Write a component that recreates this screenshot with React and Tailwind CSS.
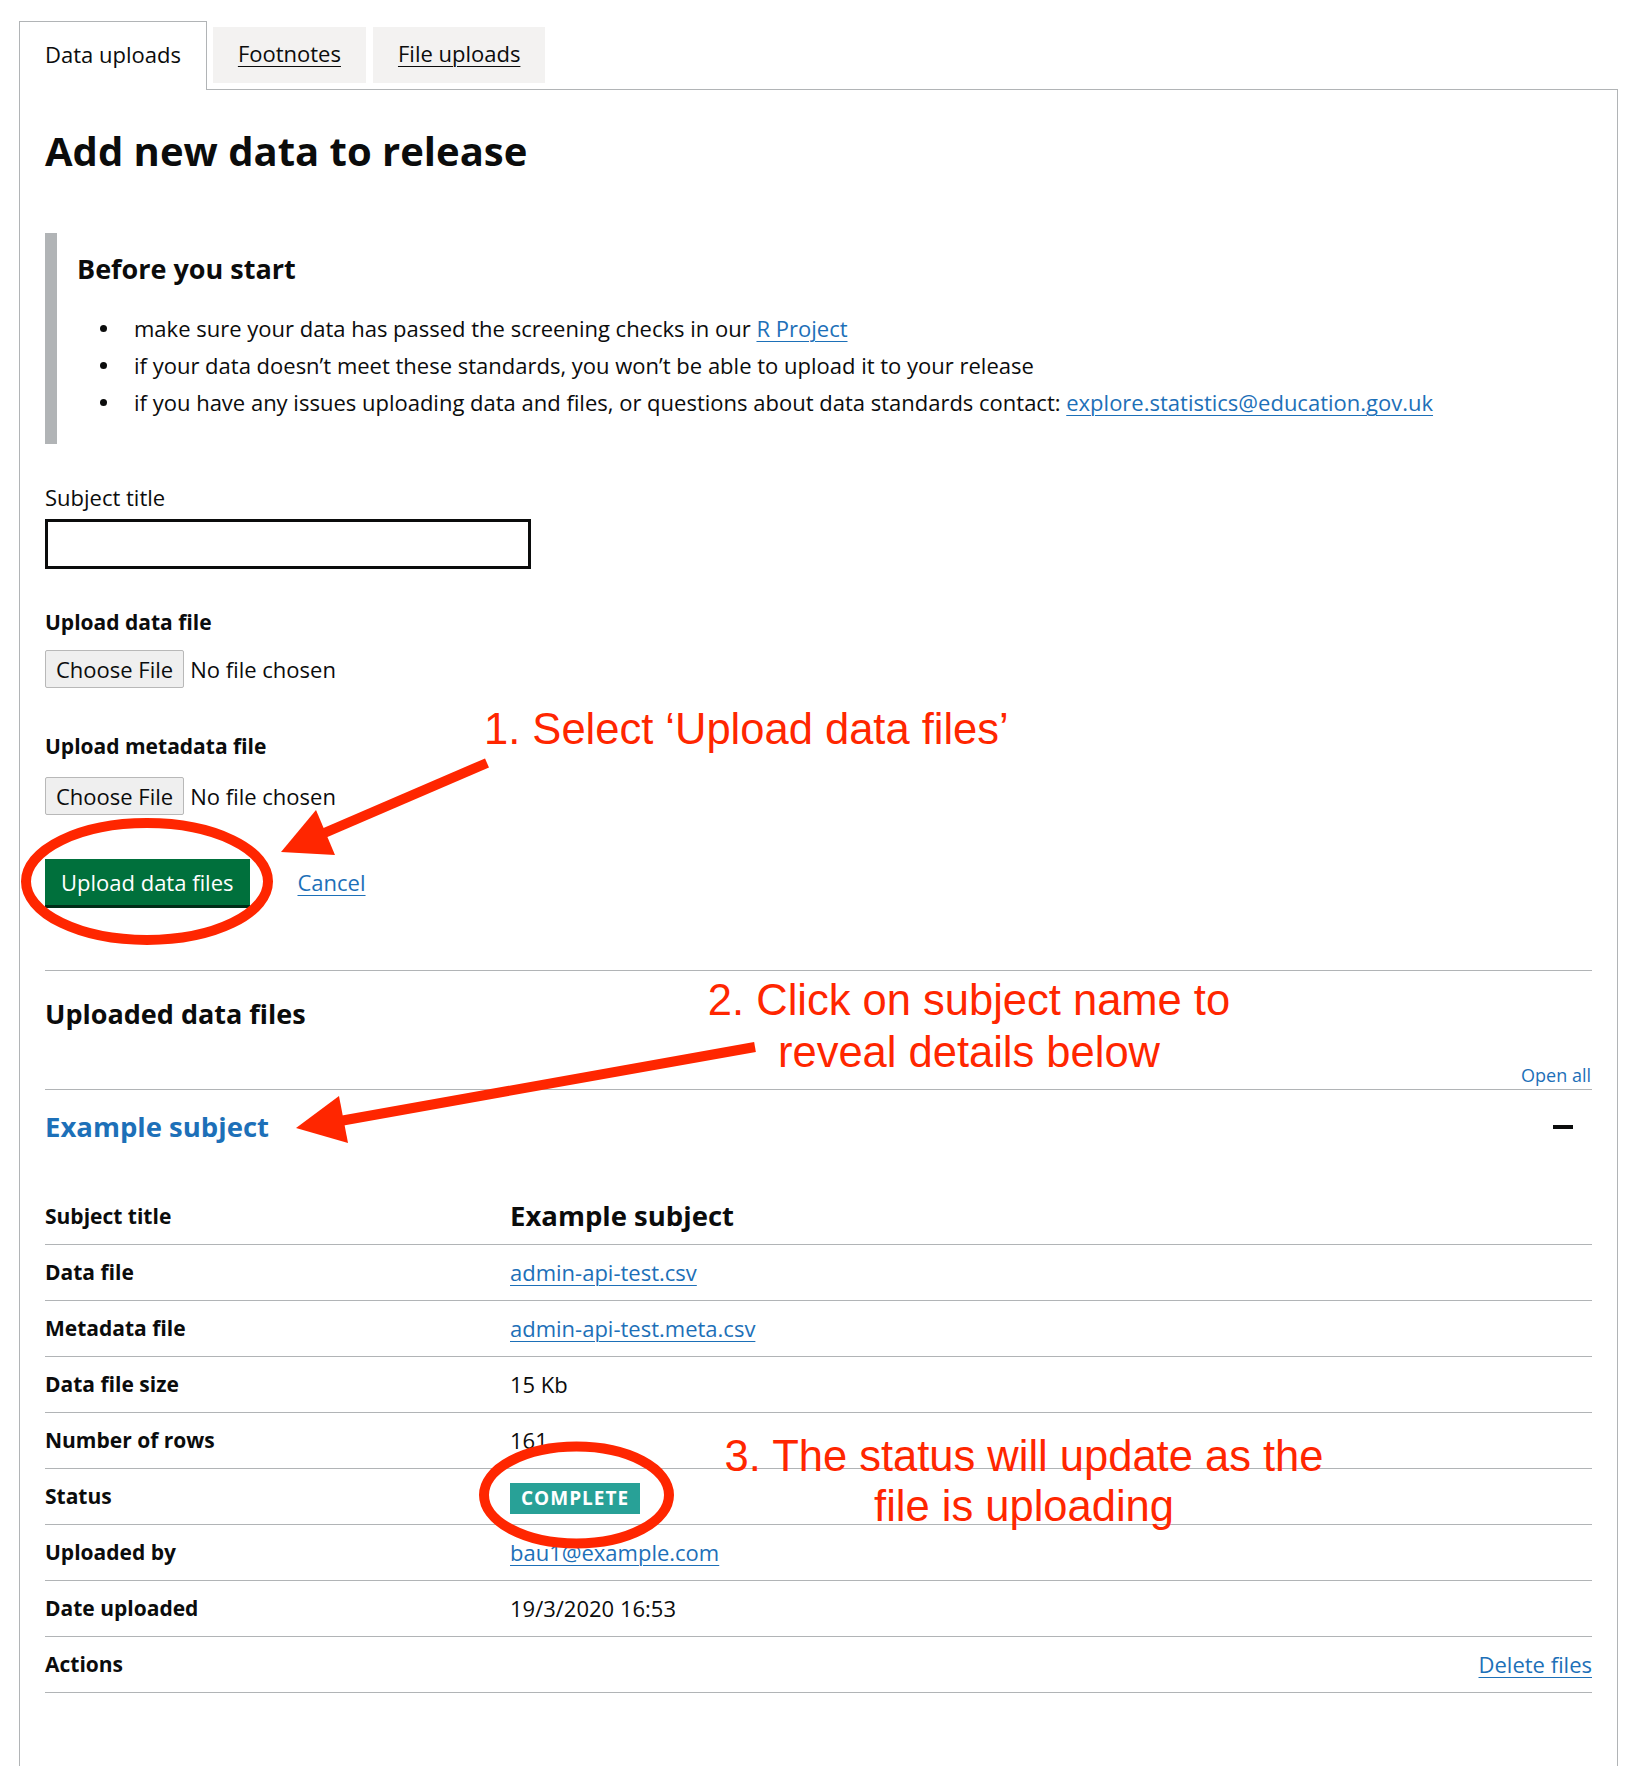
export default function App() {
  const link = "text-[#1d70b8] underline decoration-1 underline-offset-[4px]";
  const rows = [
    { k: "Subject title", v: <span className="text-[27.5px] font-bold leading-[32px]">Example subject</span> },
    { k: "Data file", v: <a className={link}>admin-api-test.csv</a> },
    { k: "Metadata file", v: <a className={link}>admin-api-test.meta.csv</a> },
    { k: "Data file size", v: "15 Kb" },
    { k: "Number of rows", v: "161" },
    {
      k: "Status",
      v: (
        <span className="inline-flex items-center h-[31px] px-[11px] bg-[#28a197] text-white text-[19px] font-bold tracking-[1px] leading-none">
          COMPLETE
        </span>
      ),
    },
    { k: "Uploaded by", v: <a className={link}>bau1@example.com</a> },
    { k: "Date uploaded", v: "19/3/2020 16:53" },
  ];

  return (
    <div className="relative w-[1634px] h-[1766px] overflow-hidden bg-white font-['Open_Sans',sans-serif] text-[#0b0c0c]">
      {/* Tabs */}
      <div className="flex items-end pl-[19px] pt-[21px]">
        <div className="relative z-10 -mb-px h-[69px] flex items-center px-[25px] pb-[4px] border border-b-0 border-[#b1b4b6] bg-white text-[22px]">
          Data uploads
        </div>
        <a className="ml-[6px] mb-[6px] h-[56px] flex items-center px-[25px] pb-[4px] bg-[#f3f2f1] text-[22px] underline decoration-1 underline-offset-[4px]">
          Footnotes
        </a>
        <a className="ml-[7px] mb-[6px] h-[56px] flex items-center px-[25px] pb-[4px] bg-[#f3f2f1] text-[22px] underline decoration-1 underline-offset-[4px]">
          File uploads
        </a>
      </div>

      {/* Panel */}
      <div className="ml-[19px] w-[1599px] h-[1700px] border border-b-0 border-[#b1b4b6] px-[25px] pt-[36px]">
        <h1 className="text-[40px] leading-[50px] font-bold">Add new data to release</h1>

        {/* Inset */}
        <div className="mt-[57px] border-l-[12px] border-[#b1b4b6] pl-[20px] pt-[20px] pb-[23px]">
          <h2 className="text-[27px] leading-[32px] font-bold">Before you start</h2>
          <ul className="mt-[25px] text-[22px] leading-[37px]">
            <li className="flex items-center">
              <span className="ml-[23px] w-[7px] h-[7px] rounded-full bg-[#0b0c0c]" />
              <span className="ml-[27px]">
                make sure your data has passed the screening checks in our <a className={link}>R Project</a>
              </span>
            </li>
            <li className="flex items-center">
              <span className="ml-[23px] w-[7px] h-[7px] rounded-full bg-[#0b0c0c]" />
              <span className="ml-[27px]">
                if your data doesn’t meet these standards, you won’t be able to upload it to your release
              </span>
            </li>
            <li className="flex items-center">
              <span className="ml-[23px] w-[7px] h-[7px] rounded-full bg-[#0b0c0c]" />
              <span className="ml-[27px]">
                if you have any issues uploading data and files, or questions about data standards contact:{" "}
                <a className={link}>explore.statistics@education.gov.uk</a>
              </span>
            </li>
          </ul>
        </div>

        {/* Form */}
        <div className="mt-[38px] text-[22px] leading-[30px]">Subject title</div>
        <div className="mt-[7px] w-[486px] h-[50px] border-[3px] border-[#0b0c0c]" />

        <div className="mt-[38px] text-[21px] leading-[30px] font-bold">Upload data file</div>
        <div className="mt-[13px] flex items-center h-[38px] text-[22px]">
          <span className="h-[38px] px-[10px] flex items-center bg-[#efefef] border border-[#b8b8b8] rounded-[2px]">
            Choose File
          </span>
          <span className="ml-[6px]">No file chosen</span>
        </div>

        <div className="mt-[43px] text-[21px] leading-[30px] font-bold">Upload metadata file</div>
        <div className="mt-[16px] flex items-center h-[38px] text-[22px]">
          <span className="h-[38px] px-[10px] flex items-center bg-[#efefef] border border-[#b8b8b8] rounded-[2px]">
            Choose File
          </span>
          <span className="ml-[6px]">No file chosen</span>
        </div>

        <div className="mt-[44px] flex items-center">
          <button className="h-[46px] px-[16px] bg-[#00703c] text-white text-[22px] shadow-[0_3px_0_#002d18]">
            Upload data files
          </button>
          <a className={`ml-[48px] text-[22px] ${link}`}>Cancel</a>
        </div>

        {/* Uploaded data files */}
        <div className="mt-[65px] border-t border-[#b1b4b6]" />
        <h2 className="mt-[27px] text-[27px] leading-[32px] font-bold">Uploaded data files</h2>
        <div className="mt-[35px] flex justify-end text-[18px] leading-[20px] text-[#1d70b8] pr-[1px]">Open all</div>
        <div className="mt-[4px] border-t border-[#b1b4b6] pt-[21px]">
          <div className="flex items-center justify-between h-[32px]">
            <span className="text-[27.5px] leading-[32px] font-bold text-[#1d70b8]">Example subject</span>
            <span className="mr-[19px] w-[20px] h-[4px] bg-[#0b0c0c]" />
          </div>

          <div className="mt-[46px] text-[22px]">
            {rows.map((r) => (
              <div key={r.k} className="flex items-center h-[56px] border-b border-[#b1b4b6]">
                <div className="w-[465px] text-[21px] font-bold">{r.k}</div>
                <div className="flex-1">{r.v}</div>
              </div>
            ))}
            <div className="flex items-center h-[56px] border-b border-[#b1b4b6]">
              <div className="w-[465px] text-[21px] font-bold">Actions</div>
              <div className="flex-1 flex justify-end">
                <a className={link}>Delete files</a>
              </div>
            </div>
          </div>
        </div>
      </div>

      {/* Annotation overlay */}
      <svg
        className="absolute left-0 top-0 pointer-events-none"
        width="1634"
        height="1766"
        viewBox="0 0 1634 1766"
      >
        <ellipse cx="147" cy="881.5" rx="121" ry="58.5" fill="none" stroke="#ff2600" strokeWidth="10" />
        <ellipse cx="576.5" cy="1495" rx="92.5" ry="48.5" fill="none" stroke="#ff2600" strokeWidth="10" />
        <line x1="487" y1="763" x2="322" y2="834" stroke="#ff2600" strokeWidth="10" />
        <polygon points="281,852 316,810 335,855" fill="#ff2600" />
        <line x1="755" y1="1047" x2="340" y2="1121" stroke="#ff2600" strokeWidth="10" />
        <polygon points="296,1128 339,1096 348,1143" fill="#ff2600" />
      </svg>

      <div className="absolute left-[484px] top-[704px] text-[43.5px] leading-[51px] text-[#ff2600] font-['Liberation_Sans',Arial,sans-serif] whitespace-nowrap">
        1. Select ‘Upload data files’
      </div>
      <div className="absolute left-[669px] top-[974px] w-[600px] text-center text-[43.5px] leading-[52px] text-[#ff2600] font-['Liberation_Sans',Arial,sans-serif]">
        2. Click on subject name to
        <br />
        reveal details below
      </div>
      <div className="absolute left-[674px] top-[1431px] w-[700px] text-center text-[43.5px] leading-[50px] text-[#ff2600] font-['Liberation_Sans',Arial,sans-serif]">
        3. The status will update as the
        <br />
        file is uploading
      </div>
    </div>
  );
}
